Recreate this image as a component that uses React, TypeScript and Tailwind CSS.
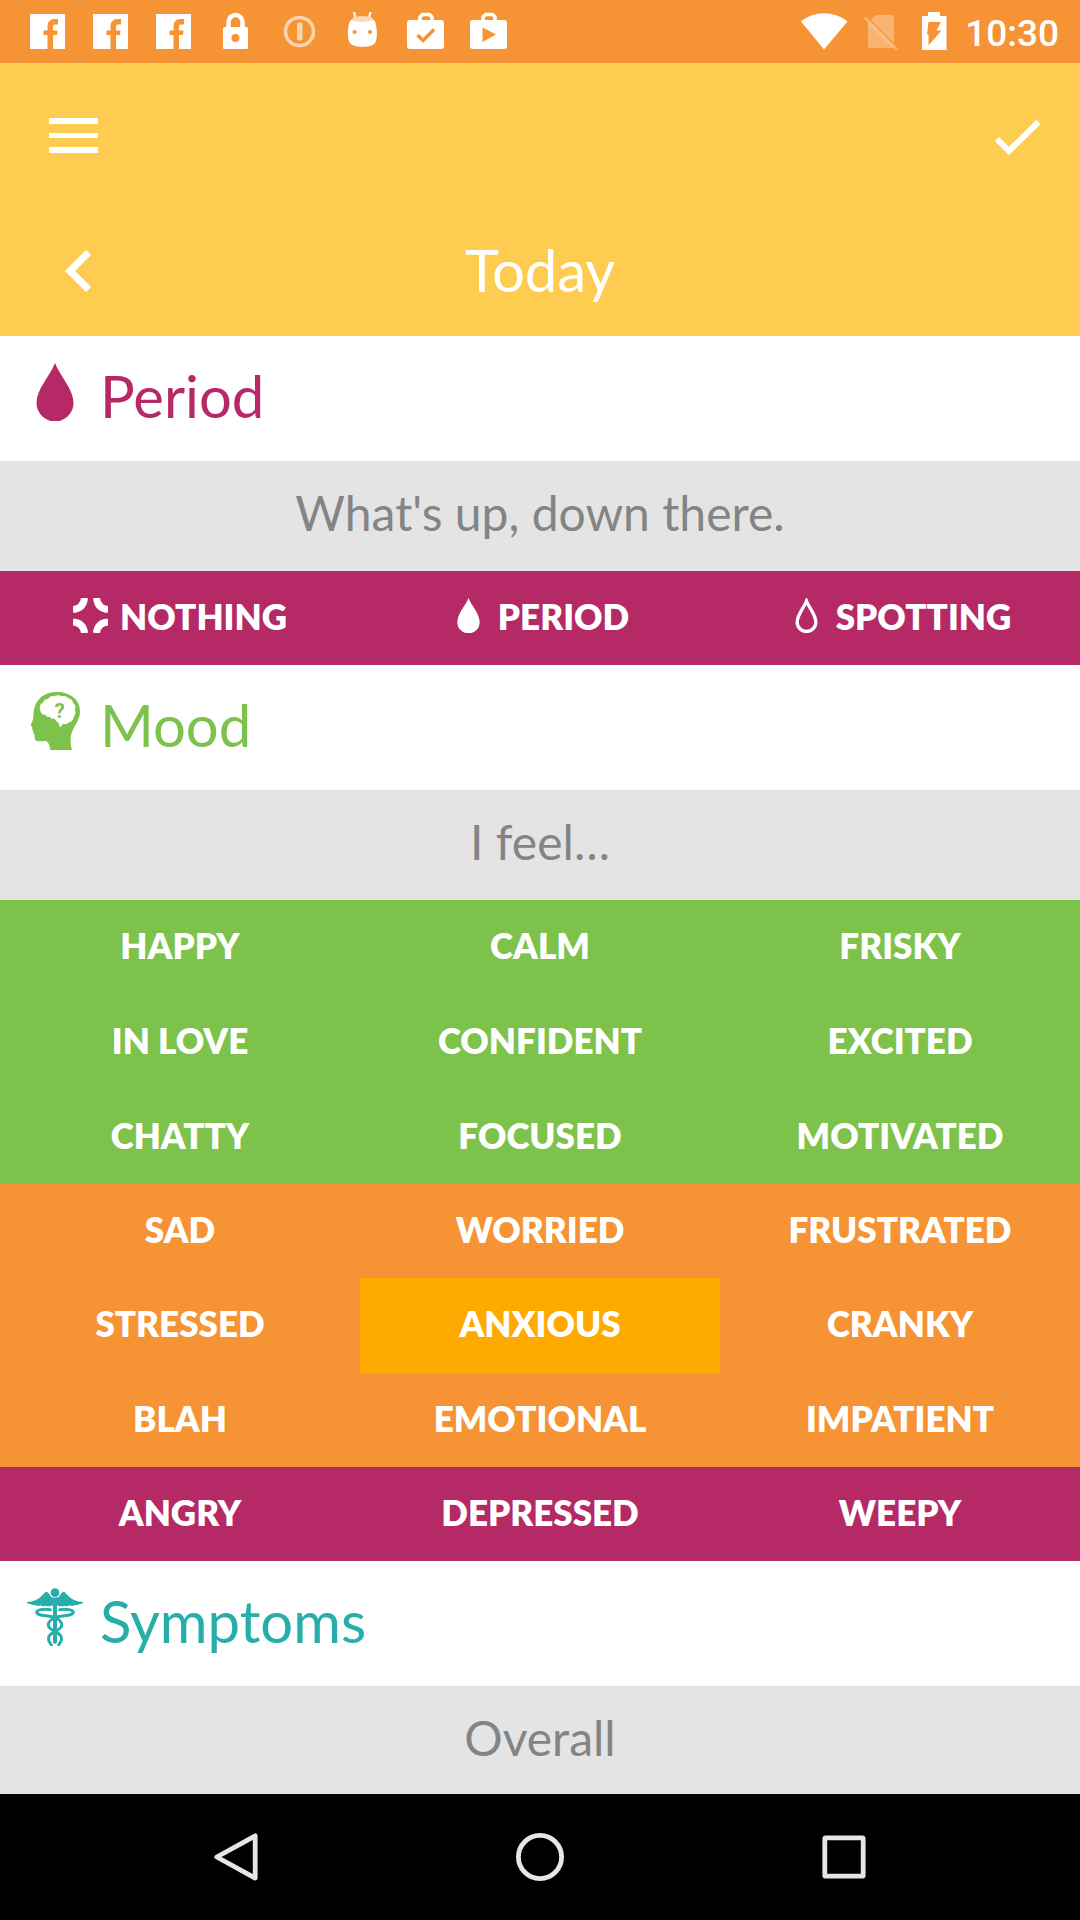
import React from "react";

const ORANGE = "#f69335";

function FacebookIcon() {
  return (
    <svg viewBox="0 0 63 63" className="size-[63px]" aria-hidden="true">
      <rect x="14" y="14" width="35" height="35" fill="#fff" />
      <path
        fill={ORANGE}
        d="M31.500 49V35H27.500V30.500H31.500V27C31.500 22 34 19 38.500 19H42V24.500H39.500C38 24.500 37 25 37 27V30.500H41.500L41 35H37V49Z"
      />
    </svg>
  );
}

function LockIcon() {
  return (
    <svg viewBox="0 0 63 63" className="size-[63px]" aria-hidden="true">
      <path d="M23.500 29V22a7 7 0 0 1 14 0V29" fill="none" stroke="#fff" strokeWidth="4.500" />
      <rect x="18" y="27" width="25" height="22" rx="1.500" fill="#fff" />
      <circle cx="30.500" cy="38" r="4" fill={ORANGE} />
    </svg>
  );
}

function KeyholeIcon() {
  return (
    <svg viewBox="0 0 63 63" className="size-[63px] opacity-60" aria-hidden="true">
      <circle cx="31.500" cy="31.500" r="14" fill="none" stroke="#fff" strokeWidth="3.500" />
      <rect x="29" y="22.500" width="5.500" height="18" rx="2" fill="#fff" />
    </svg>
  );
}

function AndroidIcon() {
  return (
    <svg viewBox="0 0 63 63" className="size-[63px]" aria-hidden="true">
      <path d="M23 12L25 20M39.500 12L37.500 20" stroke="#fff" strokeWidth="2" />
      <path
        d="M20 20C24 17.500 38 17.500 43 20C46 23 47.500 40 43.500 43.500C40 48 23 48 19.500 43.500C15.500 40 16.500 23 20 20Z"
        fill="#fff"
      />
      <path d="M22 17.500Q31 14.500 41 17.500L42 20.500Q31 24 21 20.500Z" fill="#fdd9b8" />
      <circle cx="23.500" cy="32" r="2" fill={ORANGE} />
      <circle cx="39" cy="32" r="2" fill={ORANGE} />
    </svg>
  );
}

function BagIcon({ children }: { children: React.ReactNode }) {
  return (
    <svg viewBox="0 0 63 63" className="size-[63px]" aria-hidden="true">
      <path d="M26 22V17L28.500 14.500H35.500L38 17V22" fill="none" stroke="#fff" strokeWidth="3.500" />
      <rect x="13" y="20" width="37" height="29" rx="3" fill="#fff" />
      {children}
    </svg>
  );
}

function StatusBar() {
  return (
    <div className="flex h-[63px] items-center justify-between bg-[#f69335] pr-[21px] pl-4">
      <div className="flex">
        <FacebookIcon />
        <FacebookIcon />
        <FacebookIcon />
        <LockIcon />
        <KeyholeIcon />
        <AndroidIcon />
        <BagIcon>
          <path d="M23.500 35L29 40.500L40 29.500" fill="none" stroke={ORANGE} strokeWidth="3.500" />
        </BagIcon>
        <BagIcon>
          <path d="M25.500 27.500L39 34.500L25.500 42Z" fill={ORANGE} />
        </BagIcon>
      </div>
      <div className="flex items-center">
        <svg viewBox="801 0 160 63" className="h-[63px] w-[160px]" aria-hidden="true">
          <path d="M801 21.500C814 10.500 834 10.500 847.500 21.500L824 49.500Z" fill="#fff" />
          <path d="M876 15H892Q894 15 894 17V43L871 20Z" fill="#fff" opacity="0.3" />
          <path d="M868 21L894 47Q893 48 892 48H870Q868 48 868 46Z" fill="#fff" opacity="0.3" />
          <path d="M865 17.500L897 49.500" stroke="#fff" strokeWidth="3" opacity="0.3" />
          <path d="M928 12H940V16H946.500V50H922V16H928Z" fill="#fff" />
          <path d="M928.500 22H941L936.500 30.500H941.500L928.500 45.500V34.500H927Z" fill={ORANGE} />
        </svg>
        <span className="ml-1 pt-1 font-[Roboto] text-[37px] leading-[59px] font-medium text-white">10:30</span>
      </div>
    </div>
  );
}

function Header() {
  return (
    <header className="bg-[#ffcc52] text-white">
      <div className="flex h-36 items-center justify-between pr-[38px] pl-[49px]">
        <button type="button" aria-label="Open menu">
          <svg viewBox="0 0 49 49" className="size-[49px]" fill="#fff">
            <rect y="7" width="49" height="6" />
            <rect y="22" width="49" height="5" />
            <rect y="36" width="49" height="6" />
          </svg>
        </button>
        <button type="button" aria-label="Save">
          <svg viewBox="0 0 49 49" className="size-[49px]" fill="none" stroke="#fff" strokeWidth="6">
            <path d="M4 28L16 40L45.500 11" />
          </svg>
        </button>
      </div>
      <div className="grid h-[129px] grid-cols-[1fr_auto_1fr] items-center px-[53px] pb-1">
        <button type="button" aria-label="Previous day" className="justify-self-start">
          <svg viewBox="53 245 50 50" className="size-[50px]" fill="#fff">
            <path d="M86 250L91 255L75 271L91 287L86 292L65 271Z" />
          </svg>
        </button>
        <h1 className="text-[58px] leading-[72px] font-normal">Today</h1>
      </div>
    </header>
  );
}

const DROP = "M29 0C34 13 47.500 26 47.500 40A18.500 18.500 0 0 1 10.500 40C10.500 26 24 13 29 0Z";

function PeriodIcon() {
  return (
    <svg viewBox="0 0 58 58" className="size-[58px]" fill="currentColor" aria-hidden="true">
      <path d={DROP} />
    </svg>
  );
}

function MoodIcon() {
  return (
    <svg viewBox="78 96 174 174" className="size-[58px]" fill="currentColor" aria-hidden="true">
      <path d="M151 270C149 256 145 244 136 243C126 242 111 247 106 240C102 234 106 226 102 222C98 219 101 214 98 211C95 208 99 204 96 200C91 197 92 193 96 186C101 178 99 169 101 158C104 118 134 96 170 96C212 96 240 120 240 154C240 180 224 195 216 216C210 232 211 254 216 270Z" />
      <path
        fill="#fff"
        d="M121 151C117 141 120 132 129 128C131 120 138 116 144 117C149 109 157 106 163 109C170 104 180 105 185 109C193 107 201 110 205 115C213 116 219 122 219 129C226 133 228 142 225 149C228 157 226 165 221 170C221 179 214 186 206 187C202 193 194 194 189 191L181 202C177 201 179 190 173 187C168 186 167 178 162 175C157 179 152 176 151 170C144 172 138 170 136 164C129 166 121 160 121 151Z"
      />
      <text x="179" y="174" textAnchor="middle" fontSize="62" fontWeight="700" className="font-[Roboto]">
        ?
      </text>
    </svg>
  );
}

function SymptomsIcon() {
  return (
    <svg viewBox="78 84 174 174" className="size-[58px]" fill="currentColor" aria-hidden="true">
      <circle cx="165" cy="98" r="13" />
      <path d="M165 113C155 112 152 111 150 105C147 100 142 94 137 95C131 102 120 114 108 120C100 124 88 125 80 127C82 132 88 132 92 132C95 136 101 136 106 135C110 139 117 138 121 136C126 140 132 139 137 137C145 141 155 138 159 136V248L165 252L171 248V136C175 138 185 141 193 137C198 139 204 140 209 136C213 138 220 139 224 135C229 136 235 136 238 132C242 132 248 132 250 127C242 125 230 124 222 120C210 114 199 102 193 95C188 94 183 100 180 105C178 111 175 112 165 113Z" />
      <g fill="none" stroke="currentColor" strokeLinecap="round">
        <path strokeWidth="9" d="M151 149C130 146 110 149 110 157C112 170 150 164 168 174C184 182 189 193 182 203C173 214 150 216 146 232C143 242 149 249 154 255" />
        <path strokeWidth="9" d="M179 149C200 146 220 149 220 157C218 170 180 164 162 174C146 182 141 193 148 203C157 214 180 216 184 232C187 242 181 249 176 255" />
      </g>
    </svg>
  );
}

function NothingIcon() {
  return (
    <svg viewBox="0 0 35 35" className="size-[35px]" fill="none" stroke="currentColor" strokeWidth="7" aria-hidden="true">
      <path d="M11.500 0Q10.500 10.500 0 11.500M23.500 0Q24.500 10.500 35 11.500M0 24Q10.500 25 11.500 35M23.500 35Q24.500 25 35 24" />
    </svg>
  );
}

function DropIcon() {
  return (
    <svg viewBox="0 0 58 58" className="size-[35px]" fill="currentColor" aria-hidden="true">
      <path d={DROP} />
    </svg>
  );
}

function DropOutlineIcon() {
  return (
    <svg viewBox="0 0 58 58" className="size-[35px]" fill="none" stroke="currentColor" strokeWidth="5.500" aria-hidden="true">
      <path d="M29 5C33 16 44.500 28 44.500 40A15.500 15.500 0 0 1 13.500 40C13.500 28 25 16 29 5Z" />
    </svg>
  );
}

function SectionTitle({ icon, color, children }: { icon: React.ReactNode; color: string; children: string }) {
  return (
    <div className={`flex h-[125px] items-center gap-4 bg-white pb-3.5 pl-[26px] ${color}`}>
      {icon}
      <h2 className="pt-2 text-[58px] leading-[72px] font-normal">{children}</h2>
    </div>
  );
}

function Prompt({ children }: { children: string }) {
  return (
    <p className="bg-[#e4e4e4] pt-[22px] pb-7 text-center text-[48px] leading-[60px] font-normal text-[#848484]">
      {children}
    </p>
  );
}

function Choice({ label, icon, selected = false }: { label: string; icon?: React.ReactNode; selected?: boolean }) {
  return (
    <button
      type="button"
      aria-pressed={selected}
      className={`flex items-center justify-center gap-3 pb-1 text-[35px] leading-[44px] font-extrabold text-white ${selected ? "bg-[#ffaa00]" : ""}`}
    >
      {icon && <span className="pb-0.5">{icon}</span>}
      {label}
    </button>
  );
}

const moods = [
  {
    tone: "bg-[#7dc24b] h-[284px]",
    labels: ["HAPPY", "CALM", "FRISKY", "IN LOVE", "CONFIDENT", "EXCITED", "CHATTY", "FOCUSED", "MOTIVATED"],
  },
  {
    tone: "bg-[#f69335] h-[283px]",
    labels: ["SAD", "WORRIED", "FRUSTRATED", "STRESSED", "ANXIOUS", "CRANKY", "BLAH", "EMOTIONAL", "IMPATIENT"],
  },
  { tone: "bg-[#b52a66] h-[94px]", labels: ["ANGRY", "DEPRESSED", "WEEPY"] },
];

function NavBar() {
  return (
    <nav className="flex h-[126px] items-center justify-center gap-64 bg-black text-[#e6e6e6]">
      <button type="button" aria-label="Back">
        <svg viewBox="0 0 50 50" className="w-12" fill="none" stroke="currentColor" strokeWidth="5" strokeLinejoin="round">
          <path d="M45 3V47L5 25Z" />
        </svg>
      </button>
      <button type="button" aria-label="Home">
        <svg viewBox="0 0 50 50" className="w-12" fill="none" stroke="currentColor" strokeWidth="5">
          <circle cx="25" cy="25" r="22.500" />
        </svg>
      </button>
      <button type="button" aria-label="Recent apps">
        <svg viewBox="0 0 50 50" className="w-12" fill="none" stroke="currentColor" strokeWidth="5" strokeLinejoin="round">
          <rect x="5" y="5" width="40" height="40" rx="1" />
        </svg>
      </button>
    </nav>
  );
}

export default function App() {
  return (
    <div className="flex min-h-screen flex-col bg-[#e4e4e4] font-[Lato,sans-serif]">
      <StatusBar />
      <Header />
      <main className="flex-1">
        <section>
          <SectionTitle icon={<PeriodIcon />} color="text-[#b52a66]">Period</SectionTitle>
          <Prompt>What's up, down there.</Prompt>
          <div className="grid h-[94px] grid-cols-3 bg-[#b52a66]">
            <Choice label="NOTHING" icon={<NothingIcon />} />
            <Choice label="PERIOD" icon={<DropIcon />} />
            <Choice label="SPOTTING" icon={<DropOutlineIcon />} />
          </div>
        </section>
        <section>
          <SectionTitle icon={<MoodIcon />} color="text-[#7dc24b]">Mood</SectionTitle>
          <Prompt>I feel…</Prompt>
          {moods.map((group) => (
            <div key={group.tone} className={`grid auto-rows-fr grid-cols-3 ${group.tone}`}>
              {group.labels.map((label) => (
                <Choice key={label} label={label} selected={label === "ANXIOUS"} />
              ))}
            </div>
          ))}
        </section>
        <section>
          <SectionTitle icon={<SymptomsIcon />} color="text-[#27aeab]">Symptoms</SectionTitle>
          <p className="bg-[#e4e4e4] pt-[22px] pb-6 text-center text-[48px] leading-[60px] font-normal text-[#848484]">
            Overall
          </p>
        </section>
      </main>
      <NavBar />
    </div>
  );
}
